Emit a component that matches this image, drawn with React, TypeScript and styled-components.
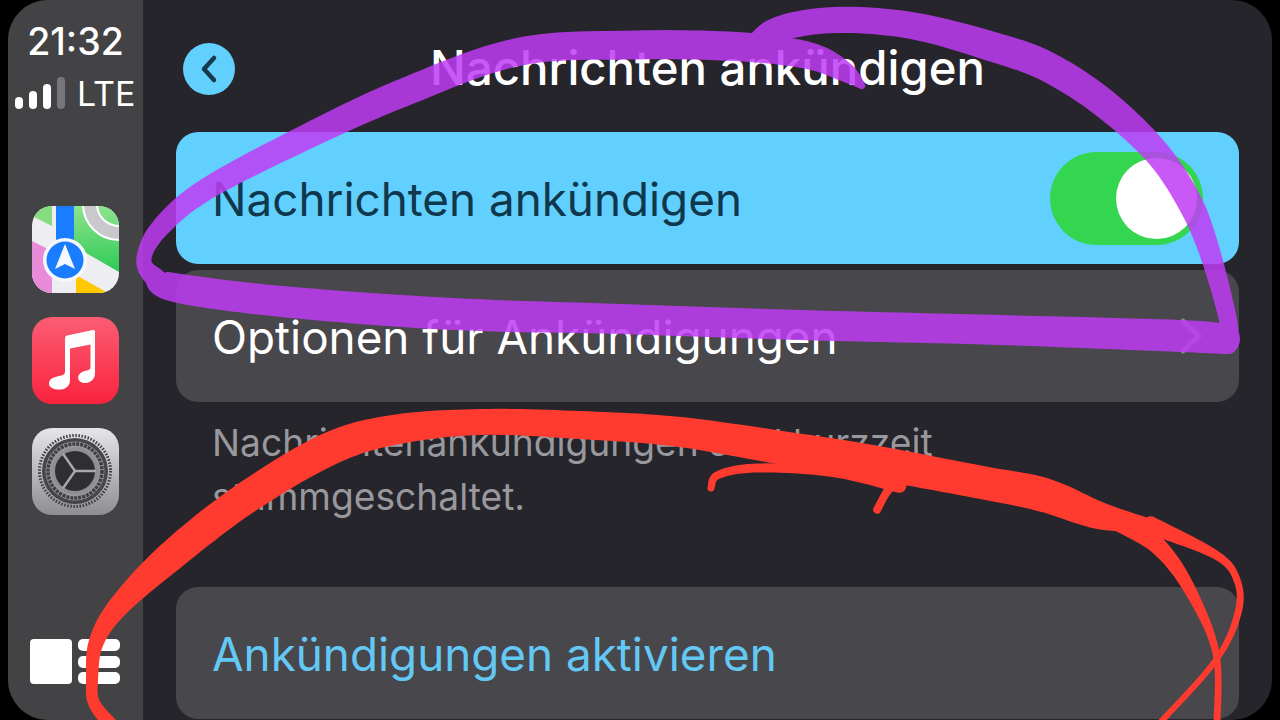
import styled, { createGlobalStyle } from 'styled-components'

type Point = [number, number, number]

const purpleStrokes: Point[][] = [
  [
    [862, 86, 7], [845, 72, 20], [810, 56, 27], [744, 47, 29], [637, 45, 29], [518, 52, 28],
    [400, 94, 28], [300, 140, 25], [205, 190, 22], [160, 228, 19], [144, 258, 15], [153, 276, 20],
    [177, 288, 29], [287, 302, 31], [453, 314, 32], [620, 319, 30], [800, 325, 30], [1000, 330, 30],
    [1180, 336, 32], [1225, 339, 30],
  ],
  [
    [1228, 344, 20], [1228, 320, 18], [1210, 253, 21], [1190, 203, 25], [1157, 153, 26],
    [1105, 104, 29], [1050, 68, 30], [1000, 49, 30], [914, 26, 27],
    [835, 20, 26], [775, 30, 24], [745, 50, 10],
  ],
]

const redStrokes: Point[][] = [
  [
    [110, 724, 14], [94, 703, 12], [92, 680, 12], [96, 643, 15], [118, 607, 21], [170, 557, 30],
    [243, 500, 32], [327, 450, 33], [393, 430, 30], [480, 422, 26], [580, 425, 28], [680, 432, 30],
    [795, 450, 34], [872, 462, 34], [979, 482, 33], [1044, 495, 34], [1101, 516, 27], [1160, 527, 10],
  ],
  [[1120, 522, 20], [1159, 547, 17], [1190, 590, 12], [1216, 653, 7], [1217, 724, 7]],
  [[1150, 525, 18], [1216, 555, 9], [1237, 580, 7], [1238, 613, 7], [1216, 660, 6], [1159, 724, 6]],
  [[711, 488, 7], [718, 475, 8], [757, 468, 9], [833, 472, 10], [900, 486, 14]],
  [[877, 510, 8], [885, 495, 8], [895, 480, 10]],
]

// smooth ribbon with a width that changes along the line, for the finger drawn marks
const ribbon = (points: Point[]) => {
  const samples: Point[] = []
  for (let i = 0; i < points.length - 1; i++) {
    const p0 = points[Math.max(i - 1, 0)]
    const p1 = points[i]
    const p2 = points[i + 1]
    const p3 = points[Math.min(i + 2, points.length - 1)]
    for (let s = 0; s < 12; s++) {
      const t = s / 12
      const at = (k: number) =>
        0.5 *
        (2 * p1[k] +
          (p2[k] - p0[k]) * t +
          (2 * p0[k] - 5 * p1[k] + 4 * p2[k] - p3[k]) * t * t +
          (3 * p1[k] - p0[k] - 3 * p2[k] + p3[k]) * t * t * t)
      samples.push([at(0), at(1), Math.max(at(2), 2)])
    }
  }
  samples.push(points[points.length - 1])

  const left: string[] = []
  const right: string[] = []
  samples.forEach((p, i) => {
    const a = samples[Math.max(i - 1, 0)]
    const b = samples[Math.min(i + 1, samples.length - 1)]
    const dx = b[0] - a[0]
    const dy = b[1] - a[1]
    const len = Math.hypot(dx, dy) || 1
    const nx = (-dy / len) * (p[2] / 2)
    const ny = (dx / len) * (p[2] / 2)
    left.push(`${(p[0] + nx).toFixed(1)} ${(p[1] + ny).toFixed(1)}`)
    right.unshift(`${(p[0] - nx).toFixed(1)} ${(p[1] - ny).toFixed(1)}`)
  })
  const endR = (samples[samples.length - 1][2] / 2).toFixed(1)
  const startR = (samples[0][2] / 2).toFixed(1)
  return `M${left.join(' L')} A${endR} ${endR} 0 0 0 ${right[0]} L${right.join(' L')} A${startR} ${startR} 0 0 0 ${left[0]} Z`
}

const MapsIcon = () => (
  <IconSvg viewBox="0 0 87 87">
    <defs>
      <linearGradient id="mapGreen" x1="0" y1="0" x2="0" y2="1">
        <stop offset="0" stopColor="#8fe28f" />
        <stop offset="1" stopColor="#2ecb55" />
      </linearGradient>
    </defs>
    <rect width="87" height="87" fill="#eeedf2" />
    <polygon points="0,0 20,0 20,20 0,10" fill="#86dc7f" />
    <polygon points="42,0 87,0 87,66 42,40" fill="url(#mapGreen)" />
    <circle cx="87" cy="-2" r="29" fill="none" stroke="#fff" strokeWidth="16" />
    <circle cx="87" cy="-2" r="29" fill="none" stroke="#c9c8cc" strokeWidth="12" />
    <polygon points="0,35 20,45 20,87 0,87" fill="#e88bd8" />
    <polygon points="44,69 76,87 44,87" fill="#ffc800" />
    <rect x="24" width="18" height="36" fill="#1a7cff" />
    <circle cx="33" cy="54" r="22" fill="#f6f7fa" />
    <circle cx="33" cy="54" r="18.500" fill="#1a7cff" />
    <polygon points="33,38 43,63 33,58 23,63" fill="#f4f8ff" />
  </IconSvg>
)

const MusicIcon = () => (
  <IconSvg viewBox="0 0 87 87">
    <defs>
      <linearGradient id="musicRed" x1="0" y1="0" x2="0" y2="1">
        <stop offset="0" stopColor="#fb5d74" />
        <stop offset="1" stopColor="#fa233e" />
      </linearGradient>
    </defs>
    <rect width="87" height="87" fill="url(#musicRed)" />
    <path
      d="M33 21 Q33 19 35 18.500 L61 13 Q63 12.600 63 14.500 V56 C63 62 59 65.500 54 66 C48.500 66.500 45.500 63 46.300 59.500 C47 56 51 54 55 53.500 Q58.500 53 58.500 50 V27.500 L38 31.500 V63 C38 69 34 72 29 72.500 C23 73 16.500 71 17 66 C17.500 61.500 22 60 27 59 Q33 58 33 55 Z"
      fill="#fff"
    />
  </IconSvg>
)

const spokes = [0, 125, 235]

const SettingsIcon = () => (
  <IconSvg viewBox="0 0 87 87">
    <defs>
      <linearGradient id="gearBack" x1="0" y1="0" x2="0" y2="1">
        <stop offset="0" stopColor="#e6e6ea" />
        <stop offset="1" stopColor="#8d8d92" />
      </linearGradient>
    </defs>
    <rect width="87" height="87" fill="url(#gearBack)" />
    <circle cx="43" cy="43" r="35.500" fill="none" stroke="#3d3d41" strokeWidth="3" strokeDasharray="1.500 1.600" />
    <circle cx="43" cy="43" r="33" fill="#45454a" />
    <circle cx="43" cy="43" r="29.500" fill="#97979b" />
    <circle cx="43" cy="43" r="27" fill="none" stroke="#3f3f43" strokeWidth="3.500" strokeDasharray="3 1" />
    <circle cx="43" cy="43" r="23.500" fill="#8f8f93" />
    <circle cx="43" cy="43" r="20" fill="#2f2f33" />
    {spokes.map((angle) => (
      <line
        key={angle}
        x1="43"
        y1="43"
        x2={43 + 21 * Math.cos((angle * Math.PI) / 180)}
        y2={43 + 21 * Math.sin((angle * Math.PI) / 180)}
        stroke="#a9a9ad"
        strokeWidth="2.400"
      />
    ))}
  </IconSvg>
)

export default function App() {
  return (
    <>
      <GlobalStyle />
      <Frame>
        <Screen>
          <Sidebar>
            <Clock>21:32</Clock>
            <Signal>
              <Bars>
                <Bar $height={12} />
                <Bar $height={18} />
                <Bar $height={25} />
                <Bar $height={32} $off />
              </Bars>
              <Network>LTE</Network>
            </Signal>
            <AppIcons>
              <MapsIcon />
              <MusicIcon />
              <SettingsIcon />
            </AppIcons>
            <Dashboard>
              <DashTile />
              <DashList>
                <DashLine />
                <DashLine />
                <DashLine />
              </DashList>
            </Dashboard>
          </Sidebar>
          <Main>
            <Header>
              <BackButton>
                <svg width="22" height="30" viewBox="0 0 22 30" fill="none">
                  <path d="M16 4 L6 15 L16 26" stroke="#163a4c" strokeWidth="4.500" strokeLinecap="round" strokeLinejoin="round" />
                </svg>
              </BackButton>
              <Title>Nachrichten ankündigen</Title>
            </Header>
            <Rows>
              <Row $active>
                <RowLabel $color="#10384c">Nachrichten ankündigen</RowLabel>
                <Toggle>
                  <Knob />
                </Toggle>
              </Row>
              <Row>
                <RowLabel $color="#ffffff">Optionen für Ankündigungen</RowLabel>
                <svg width="24" height="38" viewBox="0 0 24 38" fill="none">
                  <path d="M4 4 L20 19 L4 34" stroke="#85848a" strokeWidth="5" strokeLinecap="round" strokeLinejoin="round" />
                </svg>
              </Row>
            </Rows>
            <Footnote>
              Nachrichtenankündigungen sind kurzzeit
              <br />
              stummgeschaltet.
            </Footnote>
            <Row>
              <RowLabel $color="#64c8f5">Ankündigungen aktivieren</RowLabel>
            </Row>
          </Main>
        </Screen>
        <Marks viewBox="0 0 1280 720">
          <g fill="#bf3cf5" opacity="0.85">
            {purpleStrokes.map((points, index) => (
              <path key={index} d={ribbon(points)} />
            ))}
          </g>
          <g fill="#ff3b30">
            {redStrokes.map((points, index) => (
              <path key={index} d={ribbon(points)} />
            ))}
          </g>
        </Marks>
      </Frame>
    </>
  )
}

const GlobalStyle = createGlobalStyle`
  html, body {
    margin: 0;
    background: #000;
    overflow: hidden;
  }
  * {
    box-sizing: border-box;
  }
`

const Frame = styled.div`
  position: relative;
  width: 1280px;
  height: 720px;
  padding: 0 8px;
  background: #000;
  font-family: Inter, 'Liberation Sans', sans-serif;
`

const Screen = styled.div`
  display: flex;
  height: 720px;
  border-radius: 40px;
  overflow: hidden;
  background: #25252b;
`

const Sidebar = styled.div`
  display: flex;
  flex-direction: column;
  align-items: center;
  flex: 0 0 135px;
  background: #434245;
  padding: 20px 0 36px;
`

const Clock = styled.div`
  font-size: 37.5px;
  line-height: 44px;
  font-weight: 500;
  color: #fff;
`

const Signal = styled.div`
  display: flex;
  align-items: flex-end;
  gap: 12px;
  width: 120px;
  margin-top: 13px;
  margin-left: -1px;
`

const Bars = styled.div`
  display: flex;
  align-items: flex-end;
  gap: 6px;
`

const Bar = styled.div<{ $height: number; $off?: boolean }>`
  width: 8px;
  height: ${(p) => p.$height}px;
  border-radius: 4px;
  background: ${(p) => (p.$off ? '#77767a' : '#fff')};
`

const Network = styled.div`
  font-size: 34px;
  line-height: 32px;
  color: #fff;
  margin-bottom: -1px;
`

const AppIcons = styled.div`
  display: flex;
  flex-direction: column;
  gap: 24px;
  margin-top: 97px;
`

const IconSvg = styled.svg`
  display: block;
  width: 87px;
  height: 87px;
  border-radius: 20px;
`

const Dashboard = styled.div`
  display: flex;
  gap: 6px;
  margin-top: auto;
  margin-left: -2px;
`

const DashTile = styled.div`
  width: 42px;
  height: 45px;
  border-radius: 4px;
  background: #fff;
`

const DashList = styled.div`
  display: flex;
  flex-direction: column;
  justify-content: space-between;
  width: 42px;
`

const DashLine = styled.div`
  height: 12px;
  border-radius: 5px;
  background: #fff;
`

const Main = styled.div`
  flex: 1;
  display: flex;
  flex-direction: column;
  padding: 0 33px;
`

const Header = styled.div`
  position: relative;
  display: flex;
  align-items: center;
  justify-content: center;
  height: 132px;
  padding-top: 4px;
`

const BackButton = styled.div`
  position: absolute;
  left: 7px;
  top: 43px;
  display: flex;
  align-items: center;
  justify-content: center;
  width: 52px;
  height: 52px;
  border-radius: 50%;
  background: #62d0ff;
`

const Title = styled.div`
  font-size: 47.3px;
  line-height: 56px;
  font-weight: 500;
  color: #fff;
`

const Rows = styled.div`
  display: flex;
  flex-direction: column;
  gap: 6px;
`

const Row = styled.div<{ $active?: boolean }>`
  display: flex;
  align-items: center;
  justify-content: space-between;
  flex: 0 0 132px;
  height: 132px;
  padding: 0 36px 0 36px;
  border-radius: 22px;
  background: ${(p) => (p.$active ? '#62d0ff' : '#48474c')};
`

const RowLabel = styled.div<{ $color: string }>`
  margin-top: 4px;
  font-size: 45.8px;
  line-height: 56px;
  color: ${(p) => p.$color};
`

const Toggle = styled.div`
  display: flex;
  align-items: center;
  justify-content: flex-end;
  width: 153px;
  height: 93px;
  padding-right: 6px;
  border-radius: 47px;
  background: #34d64f;
`

const Knob = styled.div`
  width: 81px;
  height: 81px;
  border-radius: 50%;
  background: #fff;
`

const Footnote = styled.div`
  height: 185px;
  padding: 14px 36px 0;
  font-size: 37.2px;
  line-height: 54px;
  color: #98989d;
`

const Marks = styled.svg`
  position: absolute;
  inset: 0;
  width: 1280px;
  height: 720px;
  pointer-events: none;
  filter: blur(0.6px);
`
